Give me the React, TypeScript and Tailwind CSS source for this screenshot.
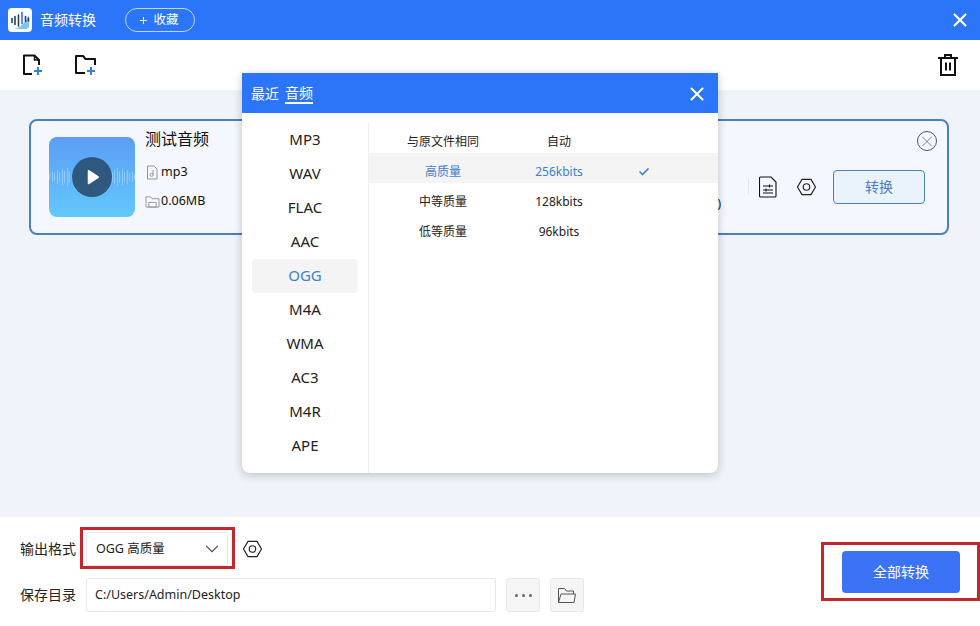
import { Check, ChevronDown, Plus, X } from 'lucide-react'

const FONT = 'font-["Noto_Sans","Noto_Sans_CJK_SC",sans-serif]'

const formats = ['MP3', 'WAV', 'FLAC', 'AAC', 'OGG', 'M4A', 'WMA', 'AC3', 'M4R', 'APE']

const qualities = [
  { name: '与原文件相同', rate: '自动' },
  { name: '高质量', rate: '256kbits', active: true },
  { name: '中等质量', rate: '128kbits' },
  { name: '低等质量', rate: '96kbits' },
]

const HexNut = ({ className }: { className?: string }) => (
  <svg viewBox="0 0 22 20" className={className} fill="none" stroke="currentColor" strokeWidth="1.3">
    <path d="M6 1.5h10L21 10l-5 8.5H6L1 10z" strokeLinejoin="round" />
    <circle cx="11" cy="10" r="3.6" />
  </svg>
)

const AppLogo = () => (
  <div className="flex h-6 w-6 items-center justify-center rounded-[4px] bg-white">
    <svg viewBox="0 0 24 24" className="h-6 w-6">
      <path d="M4 21c8 0 13-6 17-14v11a3 3 0 0 1-3 3z" fill="#7cc4f5" />
      <g stroke="#25405f" strokeWidth="1.6" strokeLinecap="round">
        <path d="M4 10.5v4M7 8.5v8M10.5 7v11" />
        <path d="M14 4.5v11" stroke="#2b76f8" />
        <path d="M17.500 8.500v5M20.500 10v3" />
      </g>
    </svg>
  </div>
)

const Thumb = () => (
  <div className="relative flex h-20 w-[86px] shrink-0 items-center justify-center overflow-hidden rounded-lg bg-gradient-to-b from-[#5c9df5] to-[#63c8fc]">
    <div className="absolute inset-x-0 top-1/2 flex -translate-y-1/2 items-center justify-between">
      {[6, 10, 8, 14, 10, 16, 12, 18, 12, 8, 6, 0, 0, 0, 0, 0, 0, 0, 0, 0, 0, 0, 0, 0, 6, 10, 14, 18, 12, 16, 10, 14, 8, 10, 6].map((h, i) => (
        <span key={i} className="w-px bg-white/30" style={{ height: h }} />
      ))}
    </div>
    <div className="relative flex h-10 w-10 items-center justify-center rounded-full bg-[#2f587f]">
      <svg viewBox="0 0 16 18" className="ml-0.5 h-[16px] w-[14px]" fill="#fff">
        <path d="M2 2.200c0-1 1-1.500 1.800-1l10.500 7c.7.500.7 1.300 0 1.800l-10.500 7c-.8.500-1.800 0-1.800-1z" />
      </svg>
    </div>
  </div>
)

const FileCard = () => (
  <div className="flex h-[116px] items-start rounded-lg border-2 border-[#4a80bd] bg-[#f4f7fd] pl-[18px] pr-[22px] pt-4">
    <Thumb />
    <div className="ml-[10px] flex flex-col text-[#111]">
      <span className="-mt-[9px] text-base leading-[22px]">测试音频</span>
      <div className="mt-[14px] flex items-center gap-[2px] text-[12.5px] leading-4">
        <svg viewBox="0 0 14 15" className="h-[15px] w-[14px]" fill="none" stroke="#888" strokeWidth="0.9">
          <path d="M2.500 1h6.500l3 3v10h-9.500z" />
          <path d="M8 5v4.500" />
          <circle cx="6.600" cy="9.800" r="1.500" />
        </svg>
        mp3
      </div>
      <div className="mt-[13px] flex items-center gap-px text-[12.5px] leading-4">
        <svg viewBox="0 0 16 14" className="h-[13px] w-[15px]" fill="none" stroke="#888" strokeWidth="0.9">
          <path d="M1 2h5l1.500 2H15v9H1z" />
          <path d="M4 8h8v5H4z" />
        </svg>
        0.06MB
      </div>
    </div>
    <div className="-mt-[6px] ml-auto flex flex-col items-end">
      <button className="mr-[-12px] flex h-5 w-5 items-center justify-center rounded-full border border-[#555] text-[#555]">
        <X size={19} strokeWidth={1} />
      </button>
      <div className="mt-[19px] flex items-center">
        <span className="mb-[-8px] mr-[27px] self-end text-xs leading-4 text-[#222]">0)</span>
        <div className="mr-[10px] h-4 w-px bg-[#e3e6ee]" />
        <svg viewBox="0 0 18 22" className="mr-[19px] h-[22px] w-[18px]" fill="none" stroke="#111" strokeWidth="1.100">
          <path d="M1.500 1h10.500l5 5v14a1 1 0 0 1-1 1H1.500a1 1 0 0 1-1-1V2a1 1 0 0 1 1-1z" />
          <path d="M4 10h10M4 14h10M4 17h10M10.500 8.500v3M7 12.500v3" />
        </svg>
        <HexNut className="mr-[16px] h-[18px] w-[21px] text-[#222]" />
        <button className="h-[34px] w-[92px] rounded-[4px] border border-[#4a80bd] bg-[#eaf2fc] text-sm text-[#4a80bd]">
          转换
        </button>
      </div>
    </div>
  </div>
)

const Dialog = () => (
  <div className="absolute left-[242px] top-[73px] flex h-[400px] w-[476px] flex-col overflow-hidden rounded-b-lg bg-white shadow-[0_2px_10px_rgba(0,0,0,0.22)]">
    <div className="flex h-10 shrink-0 items-center bg-[#2b76f8] pl-[9px] pr-[10px] pt-px text-sm text-white">
      <span>最近</span>
      <span className="ml-[6px] border-b-2 border-white leading-[18px]">音频</span>
      <X size={22} strokeWidth={2.2} className="ml-auto" />
    </div>
    <div className="flex min-h-0 flex-1 pt-[10px]">
      <div className="flex w-[127px] shrink-0 flex-col border-r border-[#eceef2] px-[10px]">
        {formats.map((f) => (
          <div
            key={f}
            className={`flex h-[34px] shrink-0 items-center justify-center rounded pb-px text-[15px] ${
              f === 'OGG' ? 'bg-[#f4f4f5] text-[#3f7fd0]' : 'text-[#222]'
            }`}
          >
            {f}
          </div>
        ))}
      </div>
      <div className="flex flex-1 flex-col">
        {qualities.map((q) => (
          <div
            key={q.name}
            className={`flex h-[30px] items-center pt-[7px] text-xs ${q.active ? 'bg-[#f4f4f5] text-[#3f7fd0]' : 'text-[#222]'}`}
          >
            <span className="w-[148px] text-center">{q.name}</span>
            <span className="w-[84px] text-center">{q.rate}</span>
            {q.active && <Check size={12} strokeWidth={3.4} className="ml-[37px]" />}
          </div>
        ))}
      </div>
    </div>
  </div>
)

const BottomBar = () => (
  <div className="flex h-[109px] shrink-0 bg-white pl-5 pr-5 text-sm text-[#222]">
    <div className="flex flex-col pt-[15px]">
      <div className="flex h-[34px] items-center">
        <span className="w-[66px]">输出格式</span>
        <div className="flex h-[34px] w-[142px] items-center justify-between rounded-[3px] border border-[#e6e8ec] bg-white pl-[9px] pr-[4px] text-[12.5px]">
          OGG 高质量
          <ChevronDown size={22} strokeWidth={1.2} className="text-[#555]" />
        </div>
        <HexNut className="ml-[14px] h-[18px] w-[21px] text-[#222]" />
      </div>
      <div className="mt-[12px] flex h-[34px] items-center">
        <span className="w-[66px]">保存目录</span>
        <div className="flex h-[34px] w-[410px] items-center rounded-[3px] border border-[#e6e8ec] pl-2 text-[12.5px]">
          C:/Users/Admin/Desktop
        </div>
        <button className="ml-[10px] flex h-[34px] w-[34px] items-center justify-center gap-[4px] rounded-[3px] border border-[#e6e8ec] bg-[#f5f5f6]">
          <span className="h-[3px] w-[3px] rounded-full bg-[#666]" />
          <span className="h-[3px] w-[3px] rounded-full bg-[#666]" />
          <span className="h-[3px] w-[3px] rounded-full bg-[#666]" />
        </button>
        <button className="ml-[10px] flex h-[34px] w-[34px] items-center justify-center rounded-[3px] border border-[#e6e8ec] bg-[#f5f5f6]">
          <svg viewBox="0 0 20 17" className="h-[17px] w-5" fill="none" stroke="#555" strokeWidth="1">
            <path d="M1.500 15.500V1.500h6l2 2.500h7v3" />
            <path d="M4 7h14.500l-1.500 8.500H1.500z" />
          </svg>
        </button>
      </div>
    </div>
    <button className="ml-auto mt-[34px] h-[42px] w-[118px] rounded-[4px] bg-[#3b72f6] text-sm text-white">
      全部转换
    </button>
  </div>
)

export default function App() {
  return (
    <div className={`relative flex h-[626px] w-[980px] flex-col overflow-hidden bg-white ${FONT}`}>
      <div className="flex h-10 shrink-0 items-center bg-[#2b76f8] pl-2 pr-[9px] text-white">
        <AppLogo />
        <span className="ml-2 text-sm">音频转换</span>
        <button className="ml-[29px] flex h-6 w-[70px] items-center justify-center gap-[4px] rounded-full border border-white/70 pr-[3px] text-[12.5px]">
          <Plus size={11} strokeWidth={2} />
          收藏
        </button>
        <X size={22} strokeWidth={2.4} className="ml-auto" />
      </div>

      <div className="flex h-[50px] shrink-0 items-center bg-white pl-[22px] pr-[21px]">
        <svg viewBox="0 0 22 22" className="h-[22px] w-[22px]" fill="none" strokeWidth="2">
          <path d="M10 20H2V1.500h10.500L17 6v5" stroke="#111" strokeLinejoin="round" />
          <path d="M12.500 1.500V6H17" stroke="#111" strokeWidth="1.500" />
          <path d="M16 13v8M12 17h8" stroke="#3f7fd0" />
        </svg>
        <svg viewBox="0 0 24 22" className="ml-[30px] h-[22px] w-6" fill="none" strokeWidth="2">
          <path d="M11 19H2V2h7l2.500 3H21v6" stroke="#111" strokeLinejoin="round" />
          <path d="M17 13v8M13 17h8" stroke="#3f7fd0" />
        </svg>
        <svg viewBox="0 0 22 24" className="ml-auto h-6 w-[22px]" fill="none" stroke="#111" strokeWidth="2">
          <path d="M1 5h20M8 5V2h6v3M4 5v17h14V5" />
          <path d="M9 9.500v8M13 9.500v8" />
        </svg>
      </div>

      <div className="min-h-0 flex-1 bg-[#f0f3fa] pl-[29px] pr-[31px] pt-[29px]">
        <FileCard />
      </div>

      <BottomBar />

      <Dialog />

      {/* red marks drawn over the screenshot */}
      <div className="absolute left-[80px] top-[527px] h-[42px] w-[155px] border-[3px] border-[#c1272d]" />
      <div className="absolute left-[821px] top-[542px] h-[59px] w-[159px] border-[3px] border-[#c1272d]" />
    </div>
  )
}
